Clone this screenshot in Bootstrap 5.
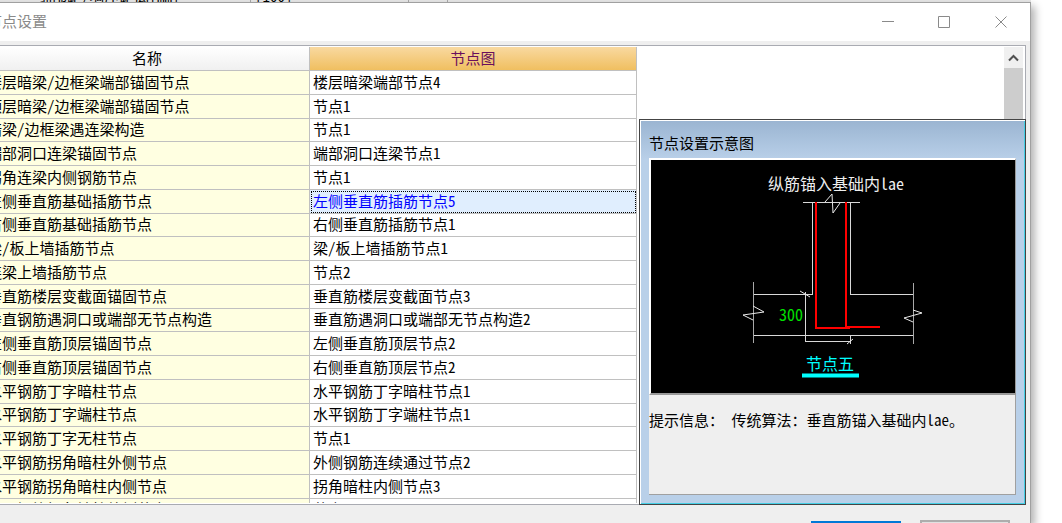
<!DOCTYPE html>
<html lang="zh-CN">
<head>
<meta charset="utf-8">
<meta name="viewport" content="width=device-width, initial-scale=1">
<title>节点设置</title>
<link href="https://cdn.jsdelivr.net/npm/bootstrap@5.3.0/dist/css/bootstrap.min.css" rel="stylesheet">
<style>
body { font: 15px/22px "Noto Sans Mono CJK SC", "Noto Sans CJK SC", sans-serif; color: #000; background: #fff; }
.backdrop { height: 2px; margin-right: 31px; background: #e8e8e8; padding-left: 37px; }
.backdrop span { line-height: 14px; margin-top: -11px; white-space: nowrap; }
.backdrop .back-name { width: 213px; }
.backdrop .back-value { border-left: 1px solid #aaa; width: 158px; padding-left: 4px; }
.backdrop .back-end { border: solid #aaa; border-width: 0 1px; width: 40px; }
.dialog { min-height: 0; margin: 0 31px 0 -22px; background: #efefef; border: 1px solid #a0a0a0; border-bottom: 0; box-shadow: 4px 4px 8px rgba(0,0,0,.3); }
.titlebar { height: 38px; background: #fff; color: #8a8a8a; padding-left: 8px; }
.titlebar span { line-height: 36px; }
.winbtn { width: 57px; height: 36px; background: none; border: 0; padding: 0; color: #8a8a8a; }
.board { min-height: 0; margin: 4px 4px 0 5px; border: 1px solid #a9abb2; background: #fff; padding: 1px 0; }
.nodes { width: 652px; table-layout: fixed; border-collapse: separate; border-spacing: 0; }
.nodes .name-col { width: 325px; }
.nodes th, .nodes td { padding: 0 2px 2px; border: solid #c0c0c0; border-width: 0 1px 1px 0; line-height: 20px; white-space: nowrap; overflow: hidden; }
.nodes th { height: 24px; font-weight: 400; text-align: center; background: linear-gradient(#fff, #f0f0f0); }
.nodes th.current { color: #6a0f5c; background: linear-gradient(#f9d9a0, #f0bf60); }
.nodes tbody tr { height: 24px; }
.nodes tbody tr:nth-child(4n+3) { height: 23px; }
.nodes tbody td { padding-left: 3px; }
.nodes tbody td:first-child { background: #ffffe1; padding-left: 2px; }
.nodes td.picked { background: #e0eefe; color: #00f; outline: 1px dotted #000; outline-offset: -2px; }
.scroller { width: 19px; margin-right: 2px; background: #cdcdcd; }
.scroller button { width: 19px; height: 21px; padding: 0; border: 0; background: #f0f0f0; }
.tip { right: -1px; bottom: -1px; width: 387px; border: 1px solid #444; background: linear-gradient(#9ab4d1, #b9d0e9 40px); padding: 11px 9px 9px; box-shadow: inset 1px 1px #fff, inset -1px -1px #45cfe5; }
.tip h2 { font-size: 15px; line-height: 23px; margin: 0 0 4px; }
.drawing { background: #000; border: solid; border-color: #fff #999 #999 #fff; border-width: 2px 1px 2px 2px; }
.hint { height: 100px; background: #efefef; border: solid #a0a0a0; border-width: 0 1px 1px 0; padding-top: 14px; white-space: pre; }
.actions { height: 18px; padding: 15px 20px 0; gap: 19px; }
.actions button { width: 90px; height: 28px; border: 2px solid #adadad; background: #e1e1e1; }
.actions .confirm { border-color: #0078d7; margin-top: 1px; }
</style>
</head>
<body class="vh-100 overflow-hidden d-flex flex-column">
<div class="backdrop d-flex overflow-hidden flex-shrink-0" aria-hidden="true"><span class="back-name">细部距/墙压距离[mm]</span><span class="back-value">[100]</span><span class="back-end"></span></div>
<main class="dialog d-flex flex-column flex-grow-1">
  <header class="titlebar d-flex justify-content-between flex-shrink-0">
    <span>节点设置</span>
    <div class="d-flex">
      <button class="winbtn" aria-label="最小化"><svg width="13" height="13" fill="none" stroke="currentColor"><path d="M1 5.5h12"/></svg></button>
      <button class="winbtn" aria-label="最大化"><svg width="13" height="13" fill="none" stroke="currentColor"><path d="M.5 .5h11v11H.5z"/></svg></button>
      <button class="winbtn" aria-label="关闭"><svg width="13" height="13" fill="none" stroke="currentColor"><path d="M.5 .5l11 11M11.5 .5l-11 11"/></svg></button>
    </div>
  </header>
  <section class="board position-relative flex-grow-1 d-flex justify-content-between">
    <div class="overflow-hidden">
      <table class="nodes">
        <colgroup><col class="name-col"><col></colgroup>
        <thead><tr><th scope="col">名称</th><th scope="col" class="current">节点图</th></tr></thead>
        <tbody>
          <tr><td>楼层暗梁/边框梁端部锚固节点</td><td>楼层暗梁端部节点4</td></tr>
          <tr><td>顶层暗梁/边框梁端部锚固节点</td><td>节点1</td></tr>
          <tr><td>暗梁/边框梁遇连梁构造</td><td>节点1</td></tr>
          <tr><td>端部洞口连梁锚固节点</td><td>端部洞口连梁节点1</td></tr>
          <tr><td>拐角连梁内侧钢筋节点</td><td>节点1</td></tr>
          <tr><td>左侧垂直筋基础插筋节点</td><td class="picked">左侧垂直筋插筋节点5</td></tr>
          <tr><td>右侧垂直筋基础插筋节点</td><td>右侧垂直筋插筋节点1</td></tr>
          <tr><td>梁/板上墙插筋节点</td><td>梁/板上墙插筋节点1</td></tr>
          <tr><td>连梁上墙插筋节点</td><td>节点2</td></tr>
          <tr><td>垂直筋楼层变截面锚固节点</td><td>垂直筋楼层变截面节点3</td></tr>
          <tr><td>垂直钢筋遇洞口或端部无节点构造</td><td>垂直筋遇洞口或端部无节点构造2</td></tr>
          <tr><td>左侧垂直筋顶层锚固节点</td><td>左侧垂直筋顶层节点2</td></tr>
          <tr><td>右侧垂直筋顶层锚固节点</td><td>右侧垂直筋顶层节点2</td></tr>
          <tr><td>水平钢筋丁字暗柱节点</td><td>水平钢筋丁字暗柱节点1</td></tr>
          <tr><td>水平钢筋丁字端柱节点</td><td>水平钢筋丁字端柱节点1</td></tr>
          <tr><td>水平钢筋丁字无柱节点</td><td>节点1</td></tr>
          <tr><td>水平钢筋拐角暗柱外侧节点</td><td>外侧钢筋连续通过节点2</td></tr>
          <tr><td>水平钢筋拐角暗柱内侧节点</td><td>拐角暗柱内侧节点3</td></tr>
          <tr><td>水平钢筋拐角端柱外侧节点</td><td>节点1</td></tr>
        </tbody>
      </table>
    </div>
    <div class="scroller"><button class="d-block" aria-label="向上滚动"><svg class="d-block mx-auto" width="11" height="9" fill="none" stroke="#505050" stroke-width="2"><path d="M1 7.5L5.5 3 10 7.5"/></svg></button></div>
    <aside class="tip position-absolute">
      <h2 class="fw-normal">节点设置示意图</h2>
      <div class="drawing">
        <svg class="d-block w-100" viewBox="0 0 364 233" fill="none" role="img" aria-label="节点五">
          <g stroke="#d8d8d8" shape-rendering="crispEdges">
            <path d="M152 42.500H209M161.500 43V134.500H102M199.500 43V134.500H262M102 175.500H262M154.500 132V181.500H199.500M199.500 175V184"/>
            <path stroke="#a8a8a8" d="M102.500 122V183M262.500 123V184"/>
          </g>
          <path stroke="#e8e8e8" d="M174 42L181 34 182 53 189 43M102 146L113 152 92 155 102 160M262 150L271 153 253 158 262 162M149 131L159 137M196 184L202 179"/>
          <path stroke="#f00" stroke-width="2" d="M165 42V168H199M195 42V167H229"/>
          <path stroke="#0ff" stroke-width="4" d="M151 215.500H208"/>
          <g font-size="16"><text x="117" y="30" fill="#eee">纵筋锚入基础内lae</text><text x="128" y="161" fill="#00e000">300</text><text x="155" y="210" fill="#0ff">节点五</text></g>
        </svg>
      </div>
      <div class="hint">提示信息： 传统算法：垂直筋锚入基础内lae。</div>
    </aside>
  </section>
  <footer class="actions d-flex justify-content-end flex-shrink-0 overflow-hidden">
    <button class="confirm" aria-label="确定"></button><button aria-label="取消"></button>
  </footer>
</main>
<script src="https://cdn.jsdelivr.net/npm/bootstrap@5.3.0/dist/js/bootstrap.bundle.min.js"></script>
</body>
</html>
